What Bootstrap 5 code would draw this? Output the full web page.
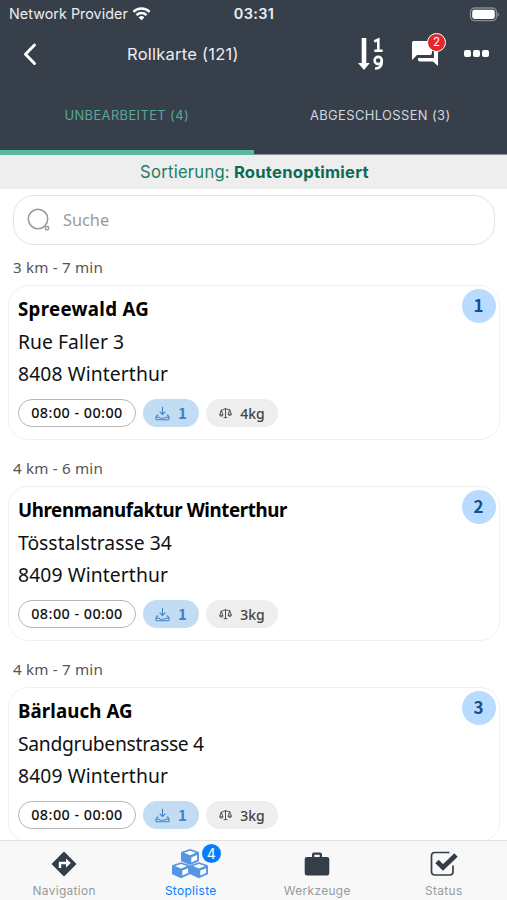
<!DOCTYPE html>
<html lang="de">
<head>
<meta charset="utf-8">
<meta name="viewport" content="width=device-width, initial-scale=1">
<title>Rollkarte</title>
<link href="https://cdn.jsdelivr.net/npm/bootstrap@5.3.0/dist/css/bootstrap.min.css" rel="stylesheet">
<style>
body{height:900px;font-family:"Noto Sans",sans-serif;color:#111;background:#fff}
svg{display:block;flex:none}
.ui{font-family:Inter,"Liberation Sans",sans-serif}
.topbar{height:155px;background:#373f4b;color:#eceef1}
.statusbar{height:28px;font-size:14.3px;letter-spacing:.05px;padding:0 8px 0 9px}
.half{flex:1 1 0}
.titlebar{height:52px;padding:0 17px 0 22px}
.side{width:105px}
.title{font-size:16.5px;letter-spacing:.25px}
.clock{font-weight:600;font-size:14.5px;letter-spacing:.3px}
.tab{height:75px;font-size:12.9px;letter-spacing:.4px;color:#d3d8de;border-bottom:1px solid #8b929a;padding-bottom:3px}
.tab-on{color:#55a997;border-bottom:5px solid #57b9a2;padding:2px 0 0}
.sortbar{height:34px;background:#eee;color:#1b7d62;font-size:16.6px;letter-spacing:.25px;padding-left:2px}
.sortbar b{font-weight:700;color:#0c6b55;margin-left:4px}
.search{height:50px;margin:6px 12px 0 13px;border:1.5px solid #e2e2e2;border-radius:21px;padding-left:12px;color:#999;font-size:16.3px}
.dist{height:46px;padding:10px 0 0 13px;font-size:15.2px;letter-spacing:.18px;color:#555}
.dist.first{height:40px;padding-top:4px}
.stop{height:155px;margin:0 7px 0 8px;border:1.5px solid #f0f0f0;border-radius:20px;padding:7px 8.5px 0 9px}
.name,.addr{height:32px;line-height:32px;font-size:19.3px;white-space:nowrap}
.name{font-weight:700;font-size:18.7px;height:33px;color:#000}
.n1{letter-spacing:.3px}.n2{letter-spacing:-.38px}.n3{letter-spacing:.1px}
.a1{letter-spacing:.05px}.a2{letter-spacing:.03px}.a3{letter-spacing:-.3px}.city{letter-spacing:.1px}
.num{width:34px;height:34px;background:#b9dbff;color:#124f92;font-weight:700;font-size:17px;right:3.5px;top:3px;padding-bottom:2px}
.num,.one{font-family:"Noto Sans CJK SC",sans-serif}
.one{font-weight:700;font-size:15px}
.pills{gap:7px;padding-top:9px}
.pill{height:28px;border-radius:14px;font-size:14.4px;font-weight:500}
.time{width:118px;border:1.5px solid #b5b5b5;color:#111;letter-spacing:.45px}
.load{width:56px;background:#c1dcf3;color:#427fc5}
.kg{width:72px;background:#eee;color:#444;font-size:14px}
.tabbar{height:60px;background:#f8f8f8;border-top:1px solid #e0e0e0;font-size:11.9px;color:#999;letter-spacing:.35px;padding-left:1px}
.tabitem{padding-top:8px}
.tabitem svg{height:30px;margin-bottom:3px}
.tabitem.active{color:#087cff}
.count{background:#087cff;color:#fff;width:19px;height:19px;font-size:14px;left:30px;top:-5px;letter-spacing:0}
.msgs{background:#e6262b;border:1.5px solid #fff;color:#fff;width:19px;height:19px;font-size:11.5px;left:16px;top:-7px}
</style>
<script src="https://cdn.jsdelivr.net/npm/bootstrap@5.3.0/dist/js/bootstrap.bundle.min.js"></script>
</head>
<body class="d-flex flex-column overflow-hidden">
<svg class="d-none" aria-hidden="true">
<symbol id="tray" viewBox="0 0 16 16"><path d="M8 .8v8M5 6l3 3 3-3M3.600 9.500H2.400L1 12.200v1.600q0 .9.900.9h12.200q.9 0 .9-.9v-1.600l-1.400-2.700h-1.200M1.200 11.900h3.200c1 1.700 6.200 1.700 7.200 0h3.200" fill="none" stroke="currentColor" stroke-width="1.100"/></symbol>
<symbol id="scale" viewBox="0 0 16 14"><path d="M8 1v11.500M5.800 12.700h4.400M2.500 3.500C5 3.700 5 2 8 2s3 1.200 5.500 1M2.700 3.500.9 9.300h4L2.700 3.500M13.200 3l-2 5.500h4l-2-5.500M.9 9.400c.3 2 3.700 2 4 0M11.200 8.600c.3 2 3.700 2 4 0" fill="none" stroke="currentColor" stroke-width="1.150"/></symbol>
</svg>
<header class="topbar ui flex-shrink-0">
  <div class="statusbar d-flex align-items-center">
    <div class="half d-flex align-items-center">
      <span class="text-nowrap me-1">Network Provider</span>
      <svg width="19" height="14" viewBox="0 0 20 15"><g fill="none" stroke="#fff" stroke-width="2.600"><path d="M1.300 5.200a12.500 12.500 0 0 1 17.400 0M4.600 8.600a7.800 7.800 0 0 1 10.800 0"/></g><path d="M10 14.300 6.900 11.200a4.500 4.500 0 0 1 6.200 0z" fill="#fff"/></svg>
    </div>
    <span class="clock">03:31</span>
    <div class="half d-flex justify-content-end">
      <svg width="31" height="15" viewBox="0 0 31 15"><rect x="2.500" y="1" width="26" height="12.600" rx="4" fill="none" stroke="#858b93" stroke-width="1.300"/><rect x="4.200" y="2.700" width="22.600" height="9.200" rx="2.300" fill="#fff"/><path d="M29.500 5v5q1.500-1 1.500-2.500T29.500 5" fill="#858b93"/></svg>
    </div>
  </div>
  <div class="titlebar d-flex align-items-center">
    <div class="side"><svg width="16" height="24" viewBox="0 0 16 24"><path d="M12.500 3 3.500 12.300l9 9.200" fill="none" stroke="#fff" stroke-width="3" stroke-linecap="round" stroke-linejoin="round"/></svg></div>
    <div class="title text-nowrap">Rollkarte (121)</div>
    <div class="d-flex align-items-center ms-auto">
      <svg width="30" height="34" viewBox="0 0 30 34" class="me-4"><path d="M4.700 1h4.600v25h3.500L7 33 1 26h3.700z" fill="#fff"/><g fill="none" stroke="#fff" stroke-width="2.600"><path d="M17.300 4.500 21.300 2.600V13.500M17.300 13.700h8.300"/><circle cx="21.200" cy="23.500" r="3.600"/><path d="M24.800 23.500q.3 8.300-6.800 8"/></g></svg>
      <div class="position-relative me-4">
        <svg width="29" height="28" viewBox="0 0 29 28"><path d="M2.500 1h17q1.500 0 1.500 1.500V13q0 2-2 2H6l-5 5V2.500Q1 1 2.500 1zM23 6h4v20l-5-4.500H9q-2 0-2-2V18h16z" fill="#fff"/></svg>
        <span class="msgs position-absolute rounded-circle d-flex align-items-center justify-content-center">2</span>
      </div>
      <svg width="26" height="8" viewBox="0 0 26 8"><g fill="#fff"><rect x="0" y="0" width="7" height="7" rx="2"/><rect x="9" y="0" width="7" height="7" rx="2"/><rect x="18" y="0" width="7" height="7" rx="2"/></g></svg>
    </div>
  </div>
  <div class="row g-0">
    <div class="col tab tab-on d-flex align-items-center justify-content-center">UNBEARBEITET (4)</div>
    <div class="col tab d-flex align-items-center justify-content-center">ABGESCHLOSSEN (3)</div>
  </div>
</header>
<div class="sortbar ui d-flex align-items-center justify-content-center flex-shrink-0">Sortierung: <b>Routenoptimiert</b></div>
<main class="flex-fill overflow-hidden">
  <div class="search d-flex align-items-center">
    <svg width="25" height="26" viewBox="0 0 25 26" class="me-2"><g fill="none" stroke="#999" stroke-width="1.500"><circle cx="12" cy="12" r="9.700"/><circle cx="21" cy="21.300" r="1.700"/></g></svg>
    <span class="ms-1">Suche</span>
  </div>
  <div class="dist first d-flex align-items-center">3 km - 7 min</div>
  <section class="stop position-relative">
    <span class="num position-absolute rounded-circle d-flex align-items-center justify-content-center">1</span>
    <div class="name n1">Spreewald AG</div><div class="addr a1">Rue Faller 3</div><div class="addr city">8408 Winterthur</div>
    <div class="d-flex pills"><span class="pill time d-flex align-items-center justify-content-center">08:00 - 00:00</span><span class="pill load d-flex align-items-center justify-content-center gap-2"><svg width="15" height="15"><use href="#tray"/></svg><span class="one">1</span></span><span class="pill kg d-flex align-items-center justify-content-center gap-2"><svg width="13" height="12"><use href="#scale"/></svg>4kg</span></div>
  </section>
  <div class="dist d-flex align-items-center">4 km - 6 min</div>
  <section class="stop position-relative">
    <span class="num position-absolute rounded-circle d-flex align-items-center justify-content-center">2</span>
    <div class="name n2">Uhrenmanufaktur Winterthur</div><div class="addr a2">Tösstalstrasse 34</div><div class="addr city">8409 Winterthur</div>
    <div class="d-flex pills"><span class="pill time d-flex align-items-center justify-content-center">08:00 - 00:00</span><span class="pill load d-flex align-items-center justify-content-center gap-2"><svg width="15" height="15"><use href="#tray"/></svg><span class="one">1</span></span><span class="pill kg d-flex align-items-center justify-content-center gap-2"><svg width="13" height="12"><use href="#scale"/></svg>3kg</span></div>
  </section>
  <div class="dist d-flex align-items-center">4 km - 7 min</div>
  <section class="stop position-relative">
    <span class="num position-absolute rounded-circle d-flex align-items-center justify-content-center">3</span>
    <div class="name n3">Bärlauch AG</div><div class="addr a3">Sandgrubenstrasse 4</div><div class="addr city">8409 Winterthur</div>
    <div class="d-flex pills"><span class="pill time d-flex align-items-center justify-content-center">08:00 - 00:00</span><span class="pill load d-flex align-items-center justify-content-center gap-2"><svg width="15" height="15"><use href="#tray"/></svg><span class="one">1</span></span><span class="pill kg d-flex align-items-center justify-content-center gap-2"><svg width="13" height="12"><use href="#scale"/></svg>3kg</span></div>
  </section>
</main>
<nav class="tabbar ui row g-0 flex-shrink-0 text-center">
  <div class="col tabitem d-flex flex-column align-items-center"><svg width="30" viewBox="0 0 30 30"><path d="M15 3.500 26.500 15 15 26.500 3.500 15z" fill="#343e48" stroke="#343e48" stroke-width="1.500" stroke-linejoin="round"/><path d="M11 19v-5h7" fill="none" stroke="#fff" stroke-width="2.400"/><path d="m17 9.500 4.800 4.500-4.800 4.500z" fill="#fff"/></svg>Navigation</div>
  <div class="col tabitem active d-flex flex-column align-items-center"><div class="position-relative"><svg width="38" viewBox="0 0 38 30"><defs><g id="cube"><path d="m9 0 8.200 2.700q.8.300.8 1v7.500q0 .8-.8 1.200L9 16 .8 12.400Q0 12 0 11.200V3.700q0-.7.800-1z" fill="#5794e3"/><path d="m9 1.800 6 2L9 6.200 3 3.800zM10.300 8.400l5.800-2.300v4.600l-5.800 2.700z" fill="#fff"/></g></defs><use href="#cube" x="9" y="0"/><use href="#cube" x="0" y="13.200"/><use href="#cube" x="18" y="13.200"/></svg><span class="count position-absolute rounded-circle d-flex align-items-center justify-content-center">4</span></div>Stopliste</div>
  <div class="col tabitem d-flex flex-column align-items-center"><svg width="30" viewBox="0 0 30 30"><path d="M5 8h5V5.500q0-2 2-2h6q2 0 2 2V8h5q2.300 0 2.300 2v14q0 2.500-2.300 2.500H5q-2.300 0-2.300-2.500V10Q2.700 8 5 8zm7.300 0h5.400V5.800h-5.400z" fill="#343e48"/></svg>Werkzeuge</div>
  <div class="col tabitem d-flex flex-column align-items-center"><svg width="30" viewBox="0 0 30 30"><path d="M20.500 3.500H6Q2.500 3.500 2.500 7v15.500Q2.500 26 6 26h14.500q3.500 0 3.500-3.500v-6" fill="none" stroke="#343e48" stroke-width="1.700"/><path d="m8 12.500 6 6L27 6" fill="none" stroke="#343e48" stroke-width="4.800"/></svg>Status</div>
</nav>
</body>
</html>
